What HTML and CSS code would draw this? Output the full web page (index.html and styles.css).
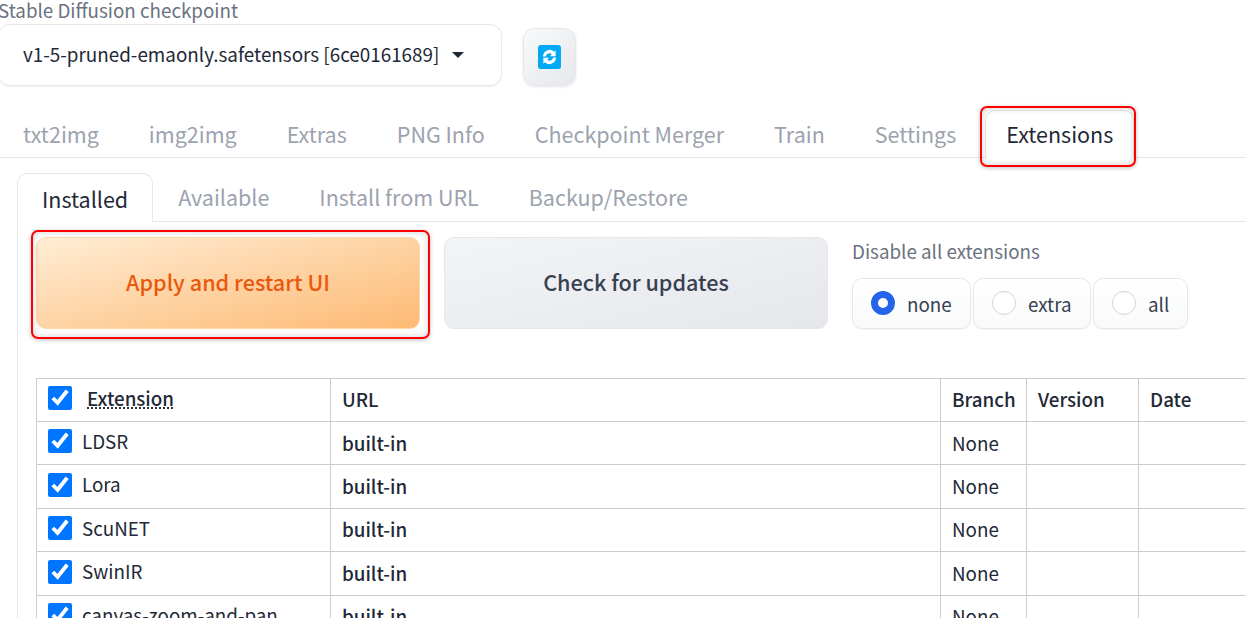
FILE: index.html
```html
<!DOCTYPE html>
<html lang="en">
<head>
<meta charset="utf-8">
<title>Extensions</title>
<link rel="stylesheet" href="styles.css">
</head>
<body>
<div class="checkpoint-row">
  <div class="checkpoint">
    <div class="field-label">Stable Diffusion checkpoint</div>
    <div class="select"><span>v1-5-pruned-emaonly.safetensors [6ce0161689]</span><i class="caret"></i></div>
  </div>
  <button class="refresh" type="button" aria-label="Refresh">
    <svg width="23" height="24" viewBox="0 0 24 24" preserveAspectRatio="none"><rect width="24" height="24" rx="2.5" fill="#03a9f4"/><path d="M5.2 11.4a6.9 6.9 0 0 1 11.6-4.6l1.6-1.6v6h-6l2-2a4 4 0 0 0-6.3 2.2zM18.8 12.6a6.9 6.9 0 0 1-11.6 4.6l-1.6 1.6v-6h6l-2 2a4 4 0 0 0 6.3-2.2z" fill="#fff"/></svg>
  </button>
</div>
<nav class="main-tabs">
  <span class="tab">txt2img</span>
  <span class="tab">img2img</span>
  <span class="tab">Extras</span>
  <span class="tab">PNG Info</span>
  <span class="tab">Checkpoint Merger</span>
  <span class="tab">Train</span>
  <span class="tab">Settings</span>
  <span class="tab tab-active">Extensions<i class="mark mark-tab"></i></span>
</nav>
<main class="panel">
  <nav class="sub-tabs">
    <span class="sub-tab sub-active">Installed</span>
    <span class="sub-tab">Available</span>
    <span class="sub-tab">Install from URL</span>
    <span class="sub-tab">Backup/Restore</span>
  </nav>
  <div class="panel-body">
    <div class="controls">
      <button class="btn btn-primary" type="button">Apply and restart UI<i class="mark mark-btn"></i></button>
      <button class="btn btn-secondary" type="button">Check for updates</button>
      <div class="disable">
        <div class="disable-label">Disable all extensions</div>
        <div class="radios">
          <label class="radio radio-none"><i class="dot dot-on"></i>none</label>
          <label class="radio radio-extra"><i class="dot"></i>extra</label>
          <label class="radio radio-all"><i class="dot"></i>all</label>
        </div>
      </div>
    </div>
    <table class="ext-table">
      <colgroup><col class="c1"><col class="c2"><col class="c3"><col class="c4"><col class="c5"></colgroup>
      <thead>
        <tr><th><div class="name"><input type="checkbox" checked><abbr>Extension</abbr></div></th><th>URL</th><th>Branch</th><th>Version</th><th>Date</th></tr>
      </thead>
      <tbody>
        <tr><td><div class="name"><input type="checkbox" checked><span>LDSR</span></div></td><td class="url">built-in</td><td>None</td><td></td><td></td></tr>
        <tr><td><div class="name"><input type="checkbox" checked><span>Lora</span></div></td><td class="url">built-in</td><td>None</td><td></td><td></td></tr>
        <tr><td><div class="name"><input type="checkbox" checked><span>ScuNET</span></div></td><td class="url">built-in</td><td>None</td><td></td><td></td></tr>
        <tr><td><div class="name"><input type="checkbox" checked><span>SwinIR</span></div></td><td class="url">built-in</td><td>None</td><td></td><td></td></tr>
        <tr><td><div class="name"><input type="checkbox" checked><span>canvas-zoom-and-pan</span></div></td><td class="url">built-in</td><td>None</td><td></td><td></td></tr>
      </tbody>
    </table>
  </div>
</main>
</body>
</html>
```
FILE: styles.css
```css
* { box-sizing: border-box; }
html, body { margin: 0; height: 618px; overflow: hidden; background: #fff; }
body { font-family: "Noto Sans CJK SC", "Noto Sans", sans-serif; color: #1f2937; width: 1246px; }
i { font-style: normal; display: block; }

.checkpoint-row { display: flex; align-items: flex-end; gap: 21px; margin-left: -2px; height: 86px; }
.checkpoint { width: 504px; }
.field-label { height: 24px; font-size: 18.8px; line-height: 19px; color: #6b7280; white-space: nowrap; }
.select { height: 62px; border: 1px solid #e5e7eb; border-radius: 12px; background: #fff; box-shadow: 0 1px 2px rgba(0,0,0,.06); display: flex; align-items: center; padding: 0 0 3px 24px; font-size: 18.85px; color: #1f2937; white-space: nowrap; }
.caret { width: 0; height: 0; margin: 3px 0 0 13px; border-left: 6px solid transparent; border-right: 6px solid transparent; border-top: 6px solid #1f2937; }
.refresh { width: 53px; height: 58px; padding: 0; border: 1px solid #e5e7eb; border-radius: 12px; background: linear-gradient(135deg, #f9fafb, #e5e7eb); box-shadow: 0 1px 3px rgba(0,0,0,.1); display: flex; align-items: center; justify-content: center; }

.main-tabs { display: flex; align-items: flex-end; height: 72px; margin-left: -2px; border-bottom: 1px solid #e5e7eb; }
.tab { position: relative; padding: 0 25px; height: 48px; line-height: 50px; font-size: 21.5px; color: #9ca3af; white-space: nowrap; }
.tab-active { color: #1f2937; background: #fff; border: 1px solid #e5e7eb; border-bottom: 0; border-radius: 10px 10px 0 0; margin: 0 0 -1px 4px; height: 48px; line-height: 46px; padding: 0 20px; }
.mark { position: absolute; border: 2px solid #f00; border-radius: 7px; box-shadow: 0 1px 4px rgba(0,0,0,.25), inset 0 0 6px rgba(0,0,0,.2); pointer-events: none; }
.mark-tab { left: -6px; right: -3px; top: -5px; bottom: -9px; }
.mark-btn { left: -6px; right: -11px; top: -8px; bottom: -11px; }

.panel { margin-left: 17px; width: 1300px; padding-top: 15px; }
.sub-tabs { display: flex; align-items: flex-end; height: 49px; border-bottom: 1px solid #e5e7eb; }
.sub-tab { padding: 0 25px; height: 48px; line-height: 48px; font-size: 21.5px; color: #9ca3af; white-space: nowrap; }
.sub-active { color: #1f2937; background: #fff; border: 1px solid #e5e7eb; border-bottom: 0; border-radius: 10px 10px 0 0; height: 49px; line-height: 49px; margin-bottom: -1px; padding: 0 24px; }
.panel-body { border-left: 1px solid #e5e7eb; height: 400px; }

.controls { display: flex; align-items: flex-start; padding: 15px 0 0 18px; height: 156px; }
.btn { position: relative; height: 92px; width: 384px; padding: 0 0 3px; border-radius: 10px; font: 500 21.6px "Noto Sans CJK SC", sans-serif; }
.btn-primary { color: #ea580c; border: 1px solid #fed7aa; background: linear-gradient(to bottom right, #ffedd5, #fdba74); margin-right: 24px; }
.btn-secondary { color: #374151; border: 1px solid #e5e7eb; background: linear-gradient(to bottom right, #f3f4f6, #e5e7eb); margin-right: 24px; }
.disable-label { height: 41px; font-size: 18.8px; line-height: 28px; color: #6b7280; white-space: nowrap; }
.radios { display: flex; gap: 2px; }
.radio { height: 51px; border: 1px solid #e5e7eb; border-radius: 10px; background: linear-gradient(#fff, #f9fafb); display: flex; align-items: center; font-size: 18.8px; color: #374151; padding: 0 0 1px 18px; gap: 12px; box-shadow: 0 1px 2px rgba(0,0,0,.04); }
.radio-none { width: 119px; }
.radio-extra { width: 118px; }
.radio-all { width: 95px; }
.dot { width: 24px; height: 24px; border-radius: 50%; border: 1px solid #d1d5db; background: #fff; }
.dot-on { border: 7px solid #2563eb; }

.ext-table { margin-left: 18px; border-collapse: collapse; table-layout: fixed; width: 1294px; font-size: 18.8px; }
.c1 { width: 294px; } .c2 { width: 610px; } .c3 { width: 86px; } .c4 { width: 112px; } .c5 { width: 192px; }
.ext-table th, .ext-table td { border: 1px solid #ccc; padding: 0 11px 2px; height: 43px; text-align: left; font-weight: 400; line-height: 26px; }
.ext-table tbody tr:nth-child(odd) td { height: 43px; }
.ext-table tbody tr:nth-child(even) td { height: 44px; }
.ext-table tbody tr:first-child td:not(:first-child) { padding-bottom: 0; }
.ext-table th { font-weight: 500; }
.ext-table .url { font-weight: 500; }
.name { display: flex; align-items: center; gap: 10px; margin-top: -2px; }
.name input { width: 24px; height: 24px; margin: 0; flex: none; }
.name span { margin-bottom: 1px; }
th .name { gap: 15px; }
abbr { text-decoration: underline dotted; text-underline-offset: 2px; }
```
